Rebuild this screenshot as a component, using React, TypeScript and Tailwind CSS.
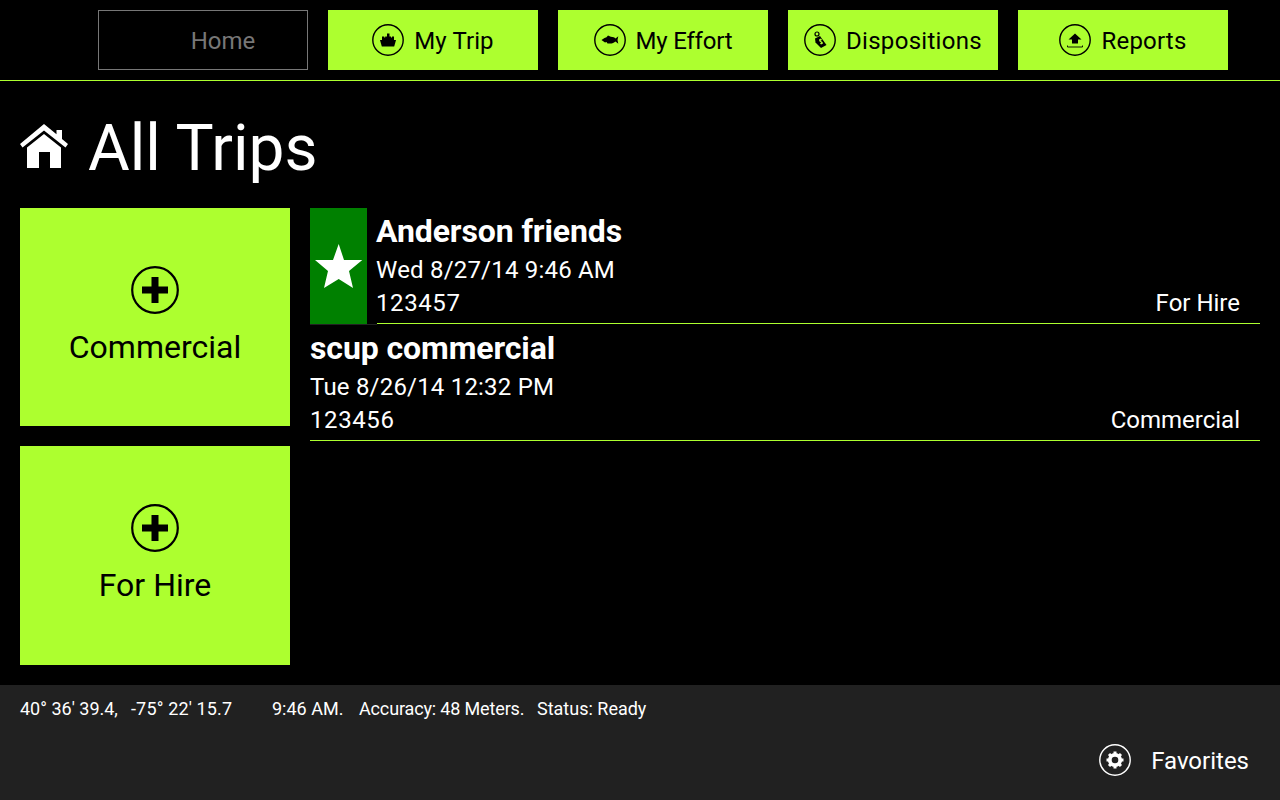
const lime = "bg-[#adff2f]";

function Ring({ children, light }: { children: React.ReactNode; light?: boolean }) {
  return (
    <svg width="32" height="32" viewBox="0 0 32 32" className="shrink-0">
      <circle cx="16" cy="16" r="15.2" fill="none" stroke={light ? "#fff" : "#000"} strokeWidth="1.4" />
      {children}
    </svg>
  );
}

const BoatIcon = () => (
  <Ring>
    <path d="M8 16h16l-1.800 6.500H9.800z" fill="#000" />
    <path d="M10 16v-3.500h2.200v1h1v-1h1.800V9.500h2.500v3h1.500v1h1v-1h2V16z" fill="#000" />
  </Ring>
);

const FishIcon = () => (
  <Ring>
    <path d="M7.500 16l3-2 2-.7 1.500-1.800 2.800 1.300c2.400 0 3.800.8 4.700 1.700l2.800-2.200-.8 3.700.8 3.700-2.800-2.200c-1.300 1.300-3.200 2.100-5.700 2.100l-2.300-.2-1-1.400-1.500.4z" fill="#000" />
  </Ring>
);

const TagIcon = () => (
  <Ring>
    <circle cx="13" cy="10" r="2" fill="none" stroke="#000" strokeWidth="1.2" />
    <path d="M11 14.500l5-2.500 6.500 9-5.500 3-5.500-5.500z" fill="#000" />
    <path d="M15 15.500l2-1 1 1.500-1.500.8 2 1.200.5 1.500-2 1-1-1.300 1.300-.7-2-1.300z" fill="#adff2f" />
  </Ring>
);

const UploadIcon = () => (
  <Ring>
    <path d="M16 9.500l6.500 6h-3.500V19.500h-6V15.500H9.500z" fill="#000" />
    <path d="M8.500 21.500V23h15v-1.500" fill="none" stroke="#000" strokeWidth="0.9" />
  </Ring>
);

const GearIcon = () => (
  <Ring light>
    <circle cx="16" cy="16" r="5.200" fill="none" stroke="#fff" strokeWidth="3.800" />
    <path
      d="M16 7.500v3M16 21.500v3M7.500 16h3M21.500 16h3M10 10l2.100 2.100M19.900 19.900L22 22M10 22l2.100-2.100M19.900 12.100L22 10"
      stroke="#fff"
      strokeWidth="3"
    />
  </Ring>
);

const PlusIcon = () => (
  <svg width="48" height="48" viewBox="0 0 48 48">
    <circle cx="24" cy="24" r="22.800" fill="none" stroke="#000" strokeWidth="2.200" />
    <path d="M11 24h26M24 11v26" stroke="#000" strokeWidth="7" />
  </svg>
);

const nav = [
  { label: "My Trip", icon: <BoatIcon />, spacing: "tracking-[0.1px]" },
  { label: "My Effort", icon: <FishIcon />, spacing: "tracking-[-0.2px]" },
  { label: "Dispositions", icon: <TagIcon />, spacing: "tracking-[0.3px]" },
  { label: "Reports", icon: <UploadIcon />, spacing: "tracking-[0.2px]" },
];

function TripText({ title, date, id, type }: { title: string; date: string; id: string; type: string }) {
  return (
    <div className="flex flex-col text-white">
      <div className="text-[32px] leading-[46px] font-bold tracking-[-0.1px]">{title}</div>
      <div className="text-[24px] leading-[32px] tracking-[0.2px]">{date}</div>
      <div className="flex justify-between pr-5 pt-px text-[24px] leading-[32px]">
        <span className="tracking-[0.6px]">{id}</span>
        <span>{type}</span>
      </div>
    </div>
  );
}

export default function App() {
  return (
    <div className="w-[1280px] h-[800px] bg-black flex flex-col overflow-hidden font-['Roboto',sans-serif]">
      <div className="h-[81px] shrink-0 border-b border-[#adff2f] flex gap-5 pl-[98px] pt-2.5">
        <div className="w-[210px] h-[60px] border border-[#777] flex items-center justify-center pl-[40px] pt-0.5 text-[24px] text-[#777]">
          Home
        </div>
        {nav.map((n) => (
          <div key={n.label} className={`w-[210px] h-[60px] ${lime} flex items-center justify-center gap-2.5 text-[24px] text-black`}>
            {n.icon}
            <span className={`pt-0.5 ${n.spacing}`}>{n.label}</span>
          </div>
        ))}
      </div>

      <div className="flex-1 flex flex-col px-5">
        <div className="h-[127px] shrink-0 flex items-center gap-5 pt-2">
          <svg width="48" height="46" viewBox="0 0 48 46" className="-mt-1">
            <path d="M24 0L0 20l2.500 3.500L24 6.500l21.500 17 2.500-3.500-6-5V6h-5.500v4.300z" fill="#fff" />
            <path d="M24 10L7 23.500V44h12V28h11v16h11V23.500z" fill="#fff" />
          </svg>
          <div className="text-[64px] leading-none text-white">All Trips</div>
        </div>

        <div className="flex gap-5">
          <div className="w-[270px] flex flex-col gap-5">
            {[
              { label: "Commercial", height: "h-[218px]" },
              { label: "For Hire", height: "h-[219px]" },
            ].map((t) => (
              <div key={t.label} className={`${t.height} ${lime} flex flex-col items-center pt-[58px] gap-[13px]`}>
                <PlusIcon />
                <span className="text-[32px] leading-[40px] text-black">{t.label}</span>
              </div>
            ))}
          </div>

          <div className="flex-1 flex flex-col">
            <div className="flex h-[117px]">
              <div className="w-[67px] shrink-0 border-b border-[#222]">
                <div className="w-[57px] h-[116px] bg-[#008000] flex items-center justify-center">
                  <svg width="48" height="45" viewBox="0 0 48 45">
                    <path d="M23.700 0L29 16h18.300L34 27l4 17-14.300-9L9 44l4-17L0 16h18z" fill="#fff" />
                  </svg>
                </div>
              </div>
              <div className="flex-1 h-[116px] border-b border-[#adff2f]">
                <div className="-ml-px">
                  <TripText title="Anderson friends" date="Wed 8/27/14 9:46 AM" id="123457" type="For Hire" />
                </div>
              </div>
            </div>
            <div className="h-[116px] border-b border-[#adff2f]">
              <TripText title="scup commercial" date="Tue 8/26/14 12:32 PM" id="123456" type="Commercial" />
            </div>
          </div>
        </div>
      </div>

      <div className="h-[115px] shrink-0 bg-[#212121] flex flex-col text-white">
        <div className="h-[46px] flex items-center pl-5 text-[18px]">
          <span className="w-[111px]">40° 36' 39.4,</span>
          <span className="w-[141px] tracking-[0.15px]">-75° 22' 15.7</span>
          <span className="w-[87px]">9:46 AM.</span>
          <span className="w-[178px] tracking-[-0.15px]">Accuracy: 48 Meters.</span>
          <span>Status: Ready</span>
        </div>
        <div className="flex-1 flex justify-end items-start pr-[31px] pt-[13px] gap-5">
          <GearIcon />
          <span className="text-[24px] leading-[32px] pt-px">Favorites</span>
        </div>
      </div>
    </div>
  );
}
